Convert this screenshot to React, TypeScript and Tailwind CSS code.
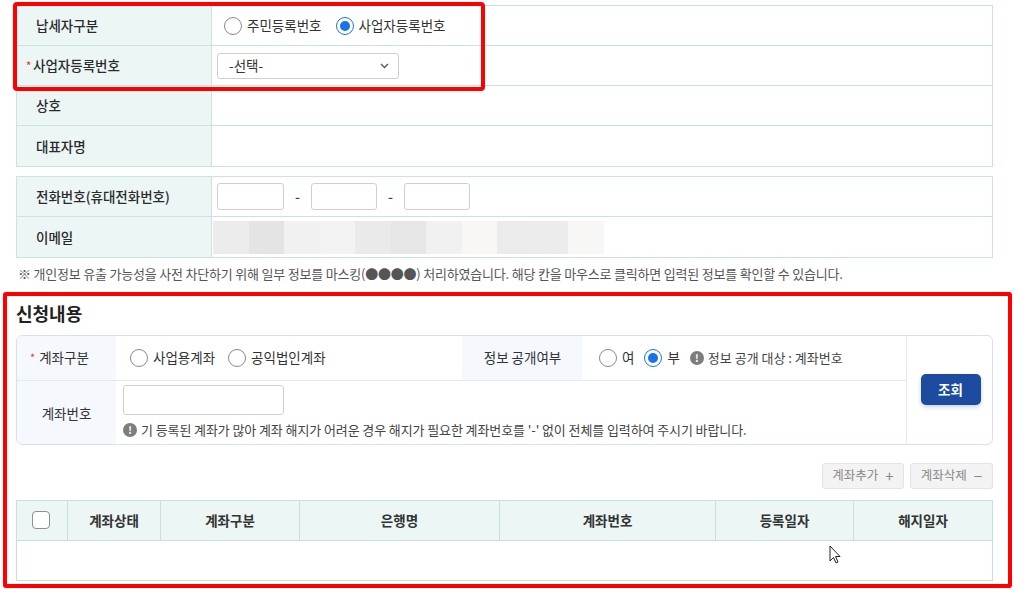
import React from "react";

const font = "font-['Noto_Sans_CJK_KR','Noto_Sans',sans-serif]";

function Radio({ checked, label }: { checked?: boolean; label: string }) {
  return (
    <label className="flex items-center gap-[5px]">
      {checked ? (
        <span className="flex h-[18px] w-[18px] items-center justify-center rounded-full border-[1.5px] border-[#1a73e8] bg-white">
          <span className="h-[10px] w-[10px] rounded-full bg-[#1a73e8]" />
        </span>
      ) : (
        <span className="h-[18px] w-[18px] rounded-full border border-[#8a8a8a] bg-white" />
      )}
      <span className="text-[13.5px] text-[#333]">{label}</span>
    </label>
  );
}

function Info() {
  return (
    <span className="flex h-[14px] w-[14px] shrink-0 items-center justify-center rounded-full bg-[#7d7d7d] text-[10px] font-bold leading-none text-white">
      !
    </span>
  );
}

function Row({ label, req, children, last }: { label: string; req?: boolean; children?: React.ReactNode; last?: boolean }) {
  return (
    <div className={`flex h-10 ${last ? "" : "border-b border-[#c9e2e5]"}`}>
      <div className="flex w-[195px] items-center border-r border-[#c9e2e5] bg-[#ebf6f5] pl-[9px] text-[13.5px] font-medium text-[#2a2a2a]">
        <span className={`w-[9px] text-[11px] text-[#e53935] ${req ? "" : "invisible"}`}>*</span>
        <span className={req ? "-ml-[2px]" : "ml-[1px]"}>{label}</span>
      </div>
      <div className="flex flex-1 items-center">{children}</div>
    </div>
  );
}

const blur = ["#ececec", "#e4e4e4", "#f1f1f1", "#f3f3f3", "#eaeaea", "#e6e6e6", "#f1f1f1", "#f9f6f4", "#ebebeb", "#ececec", "#f9f7f5"];

export default function App() {
  return (
    <div className={`relative h-[593px] w-[1024px] overflow-hidden bg-white ${font}`}>
      <div className="w-[993px] pl-4 pt-[5px]">
        <div className="border border-[#c9e2e5]">
          <Row label="납세자구분">
            <div className="flex items-center gap-[14px] pl-[12px]">
              <Radio label="주민등록번호" />
              <Radio checked label="사업자등록번호" />
            </div>
          </Row>
          <Row label="사업자등록번호" req>
            <div className="ml-[5px] flex h-[26px] w-[182px] items-center justify-between rounded-[3px] border border-[#cfcfcf] bg-white pl-[11px] pr-[9px] text-[13.5px] text-[#333]">
              <span>-선택-</span>
              <svg width="9" height="6" viewBox="0 0 9 6" fill="none" stroke="#555" strokeWidth="1.3">
                <path d="M1 1l3.5 3.5L8 1" />
              </svg>
            </div>
          </Row>
          <Row label="상호" />
          <Row label="대표자명" last />
        </div>

        <div className="mt-[9px] border border-[#c9e2e5]">
          <Row label="전화번호(휴대전화번호)">
            <div className="flex items-center pl-[5px] text-[14px] font-medium text-[#444]">
              <span className="h-[27px] w-[67px] rounded-[3px] border border-[#cfcfcf]" />
              <span className="w-[27px] text-center">-</span>
              <span className="h-[27px] w-[66px] rounded-[3px] border border-[#cfcfcf]" />
              <span className="w-[27px] text-center">-</span>
              <span className="h-[27px] w-[66px] rounded-[3px] border border-[#cfcfcf]" />
            </div>
          </Row>
          <Row label="이메일" last>
            <div className="ml-[1px] flex h-[33px]">
              {blur.map((c, i) => (
                <span key={i} className="h-full w-[35.5px]" style={{ backgroundColor: c }} />
              ))}
            </div>
          </Row>
        </div>

        <p className="mt-[6px] pl-[2px] text-[13px] tracking-[-0.2px] text-[#555]">
          ※ 개인정보 유출 가능성을 사전 차단하기 위해 일부 정보를 마스킹(●●●●) 처리하였습니다. 해당 칸을 마우스로 클릭하면 입력된 정보를 확인할 수 있습니다.
        </p>

        <h2 className="mt-[17px] text-[18px] font-bold leading-[24px] text-[#222]">신청내용</h2>

        <div className="mt-[10px] grid h-[110px] grid-cols-[99px_346px_121px_323px_1fr] grid-rows-[45px_1fr] overflow-hidden rounded-[6px] border border-[#d6e2f2] text-[13.5px] text-[#333]">
          <div className="flex items-center border-b border-[#e1e9f5] bg-[#f5f8fd] pl-[13px]">
            <span className="mr-[4px] text-[11px] text-[#e53935]">*</span>계좌구분
          </div>
          <div className="flex items-center gap-[13px] border-b border-[#e1e9f5] pl-[14px]">
            <Radio label="사업용계좌" />
            <Radio label="공익법인계좌" />
          </div>
          <div className="flex items-center justify-center border-b border-[#e1e9f5] bg-[#f5f8fd]">정보 공개여부</div>
          <div className="flex items-center gap-[10px] border-b border-[#e1e9f5] pl-[16px]">
            <Radio label="여" />
            <Radio checked label="부" />
            <span className="flex items-center gap-[4px] text-[13px] text-[#444]">
              <Info />
              정보 공개 대상 : 계좌번호
            </span>
          </div>
          <div className="row-span-2 flex items-center justify-center border-l border-[#e1e9f5] pl-[2px]">
            <button className="h-[31px] w-[60px] rounded-[5px] bg-[#1c4ba0] text-[13.5px] font-bold text-white shadow-[0_2px_4px_rgba(28,75,160,0.25)]">
              조회
            </button>
          </div>
          <div className="flex items-center justify-center bg-[#f5f8fd] pt-[2px]">계좌번호</div>
          <div className="col-span-3 flex flex-col justify-center gap-[5px] pl-[7px] pt-[1px]">
            <span className="h-[30px] w-[161px] rounded-[3px] border border-[#cfcfcf]" />
            <span className="flex items-center gap-[4px] text-[13px] tracking-[-0.1px] text-[#444]">
              <Info />
              기 등록된 계좌가 많아 계좌 해지가 어려운 경우 해지가 필요한 계좌번호를 '-' 없이 전체를 입력하여 주시기 바랍니다.
            </span>
          </div>
        </div>

        <div className="mt-[18px] flex justify-end gap-[6px]">
          <button className="flex h-[26px] w-[82px] items-center justify-center gap-[7px] rounded-[3px] border border-[#e3e3e3] bg-[#f3f3f3] text-[12.5px] text-[#888]">
            계좌추가 <span className="text-[15px] leading-none">+</span>
          </button>
          <button className="flex h-[26px] w-[83px] items-center justify-center gap-[7px] rounded-[3px] border border-[#e3e3e3] bg-[#f3f3f3] text-[12.5px] text-[#888]">
            계좌삭제 <span className="text-[15px] leading-none">−</span>
          </button>
        </div>

        <div className="mt-[11px] border border-[#c5dfe2]">
          <div className="grid h-10 grid-cols-[51px_93px_139px_200px_216px_138px_1fr] border-b border-[#c5dfe2] bg-[#ebf6f5] text-[13.5px] font-bold text-[#333]">
            <div className="flex items-center justify-center border-r border-[#c5dfe2] pr-[2px]">
              <span className="h-[18px] w-[18px] rounded-[4px] border border-[#8e8e8e] bg-white" />
            </div>
            {["계좌상태", "계좌구분", "은행명", "계좌번호", "등록일자"].map((h) => (
              <div key={h} className="flex items-center justify-center border-r border-[#c5dfe2]">{h}</div>
            ))}
            <div className="flex items-center justify-center">해지일자</div>
          </div>
          <div className="h-[39px]" />
        </div>
      </div>

      {/* annotation boxes */}
      <div className="pointer-events-none absolute left-[13px] top-[2px] h-[89px] w-[472px] rounded-[4px] border-[4px] border-[#ff0000]" />
      <div className="pointer-events-none absolute left-[3px] top-[292px] h-[296px] w-[1009px] rounded-[3px] border-[4px] border-[#ff0000]" />

      {/* mouse cursor */}
      <svg className="absolute left-[829px] top-[545px]" width="12" height="19" viewBox="0 0 12 19">
        <path d="M1 1v15l3.5-3.5 2.5 5.5 2-1-2.5-5.5H11z" fill="#fff" stroke="#222" strokeWidth="1" strokeLinejoin="round" />
      </svg>
    </div>
  );
}
